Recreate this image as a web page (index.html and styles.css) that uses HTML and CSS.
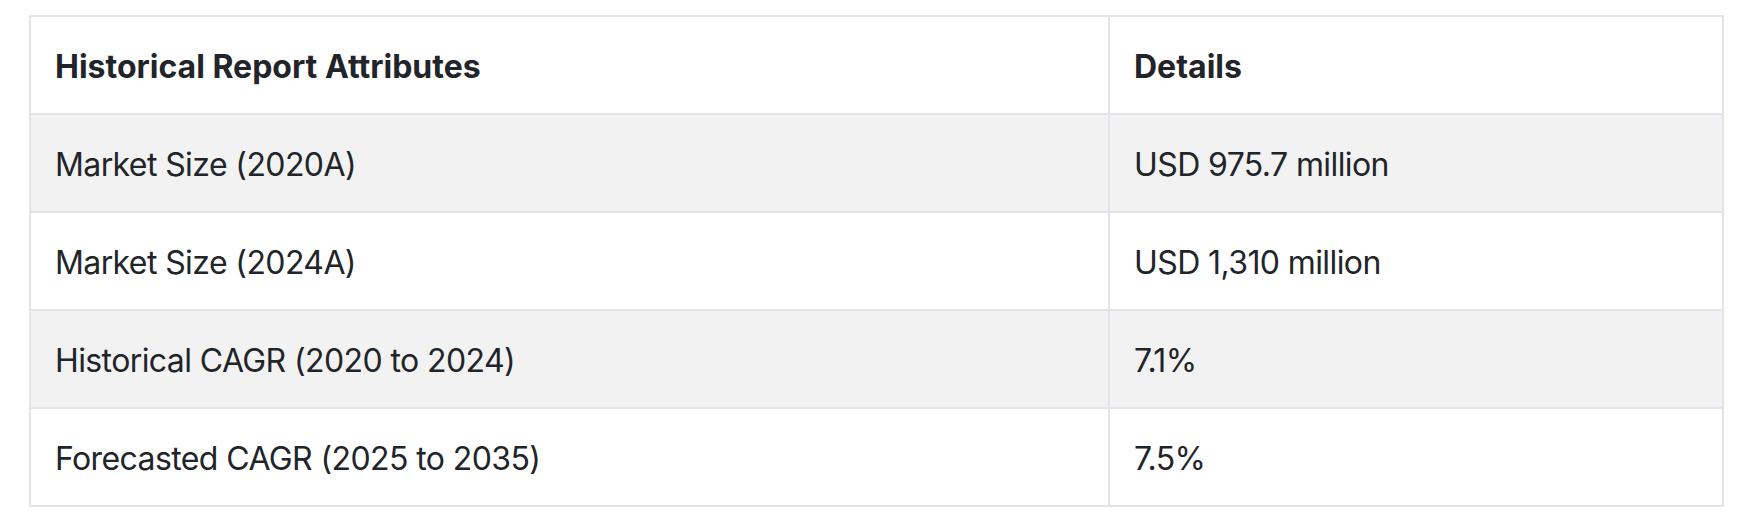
FILE: index.html
```html
<!DOCTYPE html>
<html lang="en">
<head>
<meta charset="utf-8">
<title>Historical Report</title>
<link rel="stylesheet" href="styles.css">
</head>
<body>
<table class="report">
  <thead>
    <tr><th class="col-attr">Historical Report Attributes</th><th class="col-det">Details</th></tr>
  </thead>
  <tbody>
    <tr class="striped"><td>Market Size (2020A)</td><td>USD 975.7 million</td></tr>
    <tr><td>Market Size (2024A)</td><td>USD 1,310 million</td></tr>
    <tr class="striped"><td>Historical CAGR (2020 to 2024)</td><td>7.1%</td></tr>
    <tr><td>Forecasted CAGR (2025 to 2035)</td><td>7.5%</td></tr>
  </tbody>
</table>
</body>
</html>
```
FILE: styles.css
```css
html, body {
  margin: 0;
  padding: 0;
  background: #ffffff;
}
body {
  padding: 15px 0 0 29px;
  font-family: Inter, "Noto Sans", "Liberation Sans", sans-serif;
  color: #212529;
}
.report {
  border-collapse: collapse;
  width: 1695px;
  font-size: 32px;
  line-height: 48px;
}
.report th, .report td {
  border: 2px solid #e1e4e8;
  padding: 26px 24px 22px 24px;
  text-align: left;
  vertical-align: middle;
}
.report th {
  font-weight: 700;
}
.report td {
  font-weight: 400;
  letter-spacing: -0.6px;
}
.col-attr {
  width: 1029px;
}
.striped td {
  background: #f2f2f2;
}
```
